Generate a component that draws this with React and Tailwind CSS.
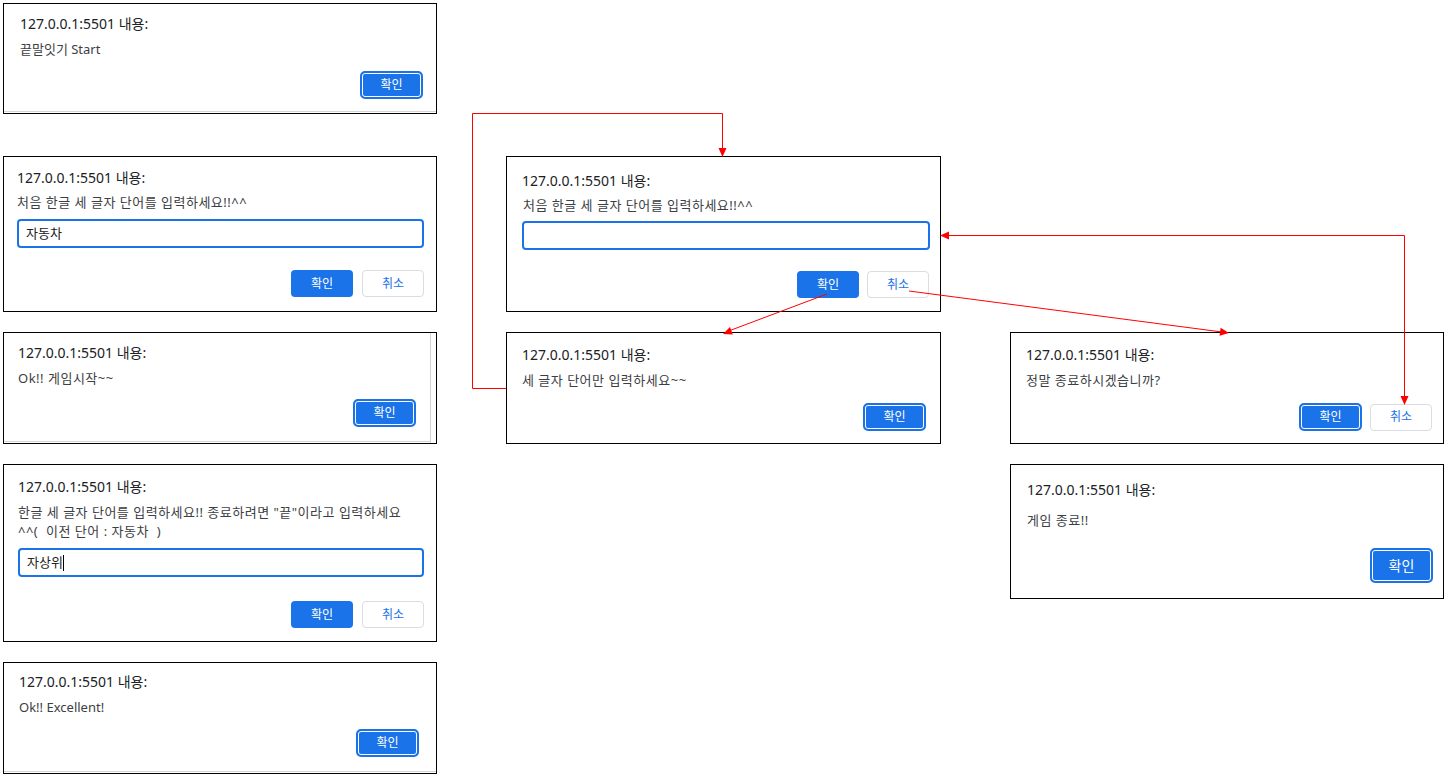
import React from 'react'

const font = { fontFamily: '"Noto Sans", "Noto Sans CJK KR", sans-serif' }

function OkButton({ focused, big }) {
  if (focused) {
    return (
      <button
        className={
          big
            ? 'w-[63px] h-[35px] rounded-[5px] border-2 border-[#1a73e8] bg-[#1a73e8] shadow-[inset_0_0_0_1px_#ffffff] text-white text-[14px]'
            : 'w-[63px] h-[28px] rounded-[5px] border-2 border-[#1a73e8] bg-[#1a73e8] shadow-[inset_0_0_0_1px_#ffffff] text-white text-[12px]'
        }
      >
        확인
      </button>
    )
  }
  return (
    <button className="w-[62px] h-[27px] rounded-[4px] bg-[#1a73e8] text-white text-[12px]">확인</button>
  )
}

function CancelButton() {
  return (
    <button className="w-[62px] h-[27px] rounded-[4px] border border-[#dadce0] bg-white text-[#1a73e8] text-[12px]">
      취소
    </button>
  )
}

function Title() {
  return <p className="text-[14px] leading-[20px] text-[#202124]">127.0.0.1:5501 내용:</p>
}

function Field({ value, caret, className }) {
  return (
    <div
      className={`h-[29px] border-2 border-[#1a73e8] rounded-[4px] px-[7px] flex items-center text-[13px] text-[#202124] ${className}`}
    >
      <span>{value}</span>
      {caret && <span className="w-px h-[16px] bg-black" />}
    </div>
  )
}

function head(tx, ty, fx, fy) {
  const dx = tx - fx
  const dy = ty - fy
  const len = Math.hypot(dx, dy)
  const ux = dx / len
  const uy = dy / len
  const bx = tx - ux * 9
  const by = ty - uy * 9
  const px = -uy * 4
  const py = ux * 4
  return `${tx},${ty} ${bx + px},${by + py} ${bx - px},${by - py}`
}

function Arrows() {
  return (
    <svg className="absolute inset-0 pointer-events-none" width="1445" height="777">
      <g stroke="#ff0000" strokeWidth="1" fill="none">
        <polyline points="506,388.5 472.5,388.5 472.5,113.5 722.5,113.5 722.5,150" />
        <line x1="827" y1="294" x2="726" y2="332" />
        <line x1="909" y1="291" x2="1222" y2="332" />
        <polyline points="1404.5,398 1404.5,235.5 946,235.5" />
      </g>
      <g fill="#ff0000">
        <polygon points={head(722.5, 157, 722.5, 113)} />
        <polygon points={head(723, 334, 827, 294)} />
        <polygon points={head(1229, 333, 909, 291)} />
        <polygon points={head(940, 235.5, 1404, 235.5)} />
        <polygon points={head(1404.5, 405, 1404.5, 235)} />
      </g>
    </svg>
  )
}

export default function App() {
  return (
    <div className="relative w-[1445px] h-[777px] bg-white overflow-hidden" style={font}>
      {/* left column */}
      <div className="absolute left-[3px] top-[3px] w-[434px] h-[111px] border border-black bg-white flex flex-col pl-[16px] pt-[10px] pr-[13px] pb-[14px]">
        <Title />
        <p className="mt-[7px] text-[13px] leading-[16px] text-[#3c4043]">끝말잇기 Start</p>
        <div className="mt-auto flex justify-end">
          <OkButton focused />
        </div>
        <div className="absolute left-0 right-0 bottom-[1px] h-px bg-[#d4d4d4]" />
      </div>

      <div className="absolute left-[3px] top-[156px] w-[434px] h-[156px] border border-black bg-white flex flex-col pl-[13px] pt-[11px] pr-[12px] pb-[14px]">
        <Title />
        <p className="mt-[6px] text-[13px] leading-[16px] tracking-[0.5px] text-[#3c4043]">처음 한글 세 글자 단어를 입력하세요!!^^</p>
        <Field value="자동차" className="mt-[9px]" />
        <div className="mt-auto flex justify-end gap-[9px]">
          <OkButton />
          <CancelButton />
        </div>
      </div>

      <div className="absolute left-[3px] top-[332px] w-[434px] h-[112px] border border-black bg-white flex flex-col pl-[14px] pt-[10px] pr-[20px] pb-[16px]">
        <Title />
        <p className="mt-[7px] text-[13px] leading-[16px] tracking-[0.5px] text-[#3c4043]">Ok!! 게임시작~~</p>
        <div className="mt-auto flex justify-end">
          <OkButton focused />
        </div>
        <div className="absolute top-0 bottom-0 right-[5px] w-px bg-[#d4d4d4]" />
        <div className="absolute left-0 right-[5px] bottom-[1px] h-px bg-[#d4d4d4]" />
      </div>

      <div className="absolute left-[3px] top-[464px] w-[434px] h-[178px] border border-black bg-white flex flex-col pl-[14px] pt-[12px] pr-[12px] pb-[13px]">
        <Title />
        <p className="mt-[6px] text-[13px] leading-[19px] tracking-[0.5px] text-[#3c4043]">
          한글 세 글자 단어를 입력하세요!! 종료하려면 "끝"이라고 입력하세요
          <br />
          ^^(&nbsp; 이전 단어 : 자동차&nbsp; )
        </p>
        <Field value="자상위" caret className="mt-[7px]" />
        <div className="mt-auto flex justify-end gap-[9px]">
          <OkButton />
          <CancelButton />
        </div>
      </div>

      <div className="absolute left-[3px] top-[662px] w-[434px] h-[112px] border border-black bg-white flex flex-col pl-[15px] pt-[9px] pr-[17px] pb-[16px]">
        <Title />
        <p className="mt-[7px] text-[13px] leading-[16px] text-[#3c4043]">Ok!! Excellent!</p>
        <div className="mt-auto flex justify-end">
          <OkButton focused />
        </div>
        <div className="absolute left-0 right-0 bottom-[1px] h-px bg-[#d4d4d4]" />
      </div>

      {/* middle column */}
      <div className="absolute left-[506px] top-[156px] w-[435px] h-[156px] border border-black bg-white flex flex-col pl-[15px] pt-[14px] pr-[10px] pb-[13px]">
        <Title />
        <p className="mt-[6px] text-[13px] leading-[16px] tracking-[0.5px] text-[#3c4043] pl-px">처음 한글 세 글자 단어를 입력하세요!!^^</p>
        <Field value="" className="mt-[8px]" />
        <div className="mt-auto flex justify-end gap-[8px] pr-px">
          <OkButton />
          <CancelButton />
        </div>
      </div>

      <div className="absolute left-[506px] top-[332px] w-[435px] h-[112px] border border-black bg-white flex flex-col pl-[15px] pt-[12px] pr-[14px] pb-[12px]">
        <Title />
        <p className="mt-[7px] text-[13px] leading-[16px] tracking-[0.5px] text-[#3c4043]">세 글자 단어만 입력하세요~~</p>
        <div className="mt-auto flex justify-end">
          <OkButton focused />
        </div>
      </div>

      {/* right column */}
      <div className="absolute left-[1010px] top-[332px] w-[434px] h-[112px] border border-black bg-white flex flex-col pl-[15px] pt-[12px] pr-[11px] pb-[12px]">
        <Title />
        <p className="mt-[7px] text-[13px] leading-[16px] tracking-[0.5px] text-[#3c4043]">정말 종료하시겠습니까?</p>
        <div className="mt-auto flex justify-end items-center gap-[8px]">
          <OkButton focused />
          <CancelButton />
        </div>
      </div>

      <div className="absolute left-[1010px] top-[464px] w-[434px] h-[135px] border border-black bg-white flex flex-col pl-[16px] pt-[15px] pr-[10px] pb-[15px]">
        <Title />
        <p className="mt-[12px] text-[13px] leading-[16px] tracking-[0.5px] text-[#3c4043]">게임 종료!!</p>
        <div className="mt-auto flex justify-end">
          <OkButton focused big />
        </div>
      </div>

      <Arrows />
    </div>
  )
}
